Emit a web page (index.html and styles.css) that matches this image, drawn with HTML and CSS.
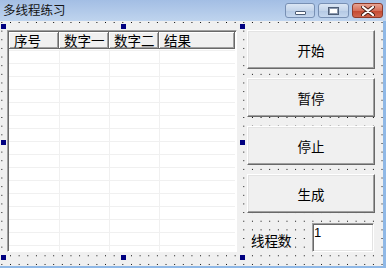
FILE: index.html
```html
<!DOCTYPE html>
<html lang="zh-CN">
<head>
  <meta charset="UTF-8" />
  <title>多线程练习</title>
  <link rel="stylesheet" href="styles.css">
</head>
<body>
  <div class="window">
    <div class="titlebar">
      <span class="title">多线程练习</span>
      <div class="caption-buttons">
        <span class="cap-btn min"><i></i></span>
        <span class="cap-btn max"><i></i></span>
        <span class="cap-btn close">
          <svg width="14" height="10" viewBox="0 0 14 10">
            <path d="M2 1 L12 9 M12 1 L2 9" stroke="#4a2018" stroke-width="4" stroke-linecap="round"/>
            <path d="M2 1 L12 9 M12 1 L2 9" stroke="#fff" stroke-width="2.2" stroke-linecap="round"/>
          </svg>
        </span>
      </div>
    </div>

    <div class="client">
      <div class="list-wrap">
        <div class="listview">
          <div class="header">
            <span class="col c1">序号</span>
            <span class="col c2">数字一</span>
            <span class="col c3">数字二</span>
            <span class="col c4">结果</span>
          </div>
          <div class="rows"></div>
        </div>
        <!-- selection handles -->
        <span class="handle" style="left:-6px;top:-6px"></span>
        <span class="handle" style="left:114px;top:-6px"></span>
        <span class="handle" style="left:233px;top:-6px"></span>
        <span class="handle" style="left:-6px;top:110px"></span>
        <span class="handle" style="left:233px;top:110px"></span>
        <span class="handle" style="left:-6px;top:225px"></span>
        <span class="handle" style="left:114px;top:225px"></span>
        <span class="handle" style="left:233px;top:225px"></span>
      </div>

      <div class="side">
        <button class="btn">开始</button>
        <button class="btn">暂停</button>
        <button class="btn">停止</button>
        <button class="btn">生成</button>
        <div class="thread-row">
          <label for="count">线程数</label>
          <textarea id="count" class="textbox">1</textarea>
        </div>
      </div>
    </div>
  </div>
</body>
</html>
```

FILE: styles.css
```css
* {
  box-sizing: border-box;
}
body {
  margin: 0;
  font-family: "Noto Sans CJK SC", "Microsoft YaHei", sans-serif;
  font-size: 13px;
  color: #000;
}
.window {
  width: 386px;
  height: 268px;
  background: #8fb8e6;
  display: flex;
  flex-direction: column;
}
.titlebar {
  height: 21px;
  display: flex;
  align-items: flex-start;
  padding-left: 3px;
  background: linear-gradient(#a3bee4, #bfd4ee);
}
.title {
  font-size: 12.5px;
  line-height: 20px;
  color: #151515;
}
.caption-buttons {
  margin-left: auto;
  margin-right: 3px;
  margin-top: 3px;
  display: flex;
  gap: 3px;
}
.cap-btn {
  height: 15px;
  width: 31px;
  border: 1px solid #7890b4;
  border-radius: 3px;
  display: flex;
  align-items: center;
  justify-content: center;
  background: linear-gradient(#dbe6f4, #c3d4ea 50%, #b3c8e4 51%, #c5d7ee);
}
.cap-btn.min {
  width: 30px;
}
.cap-btn.min i {
  width: 11px;
  height: 4px;
  margin-top: 4px;
  background: #fff;
  border: 1px solid #4d5d76;
  border-radius: 1px;
}
.cap-btn.max i {
  width: 11px;
  height: 8px;
  border: 1px solid #4d5d76;
  background: #fff;
  box-shadow: inset 0 0 0 1px #8e9bb0, inset 0 0 0 2px #fff;
}
.cap-btn.close {
  border-color: #8e3b2c;
  background: linear-gradient(#e8a493, #d6705b 50%, #c4472f 51%, #d0674f);
}
.client {
  width: 383px;
  height: 245px;
  display: flex;
  padding: 9px 0 0 7px;
  background-color: #f0f0f0;
  background-image: conic-gradient(at 1px 1px, transparent 75%, #000 0);
  background-size: 8.65px 8.65px;
  background-position: 10px 1px;
}
.list-wrap {
  position: relative;
  width: 230px;
  height: 222px;
}
.listview {
  width: 100%;
  height: 100%;
  border: 1px solid;
  border-color: #a0a0a0 #fff #fff #a0a0a0;
  box-shadow: inset 1px 1px #696969;
  padding: 1px 1px 0 1px;
  background: #fff;
  display: flex;
  flex-direction: column;
}
.header {
  display: flex;
  height: 17px;
}
.col {
  height: 17px;
  line-height: 16px;
  padding-left: 5px;
  font-size: 13.5px;
  background: #f0f0f0;
  border-right: 1px solid #696969;
  border-bottom: 1px solid #696969;
  box-shadow: inset 1px 1px #fff, inset -1px -1px #a0a0a0;
  white-space: nowrap;
}
.c1, .c2, .c3 {
  width: 50px;
}
.c4 {
  width: 76px;
}
.rows {
  flex: 1;
  background-color: #fff;
  background-image:
    linear-gradient(90deg, transparent 50px, #f0f0f0 50px, #f0f0f0 51px, transparent 51px,
      transparent 100px, #f0f0f0 100px, #f0f0f0 101px, transparent 101px,
      transparent 150px, #f0f0f0 150px, #f0f0f0 151px, transparent 151px,
      transparent 226px, #f0f0f0 226px),
    repeating-linear-gradient(#f0f0f0 0, #f0f0f0 1px, transparent 1px, transparent 13px);
  background-position: 0 0, 0 1px;
}
.handle {
  position: absolute;
  width: 5px;
  height: 5px;
  background: #000080;
}
.side {
  width: 128px;
  margin-left: 10px;
  display: flex;
  flex-direction: column;
  gap: 9px;
}
.btn {
  height: 39px;
  padding: 0;
  font-family: inherit;
  font-size: 13.5px;
  color: #000;
  background: #f0f0f0;
  border: 1px solid;
  border-color: #fff #696969 #696969 #fff;
  box-shadow: inset -1px -1px #a0a0a0, inset 1px 1px #e3e3e3;
}
.thread-row {
  margin-top: 1px;
  height: 29px;
  display: flex;
  align-items: flex-end;
}
.thread-row label {
  margin-left: 4px;
  margin-bottom: 4px;
  line-height: 15px;
  font-size: 13.5px;
}
.textbox {
  margin-left: auto;
  margin-right: 1px;
  width: 62px;
  height: 29px;
  padding: 1px 1px;
  resize: none;
  overflow: hidden;
  font-family: "Liberation Sans", sans-serif;
  font-size: 13px;
  line-height: 15px;
  background: #fff;
  border: 1px solid;
  border-color: #a0a0a0 #fff #fff #a0a0a0;
  box-shadow: inset 1px 1px #696969, inset -1px -1px #e3e3e3;
  outline: none;
}
```
